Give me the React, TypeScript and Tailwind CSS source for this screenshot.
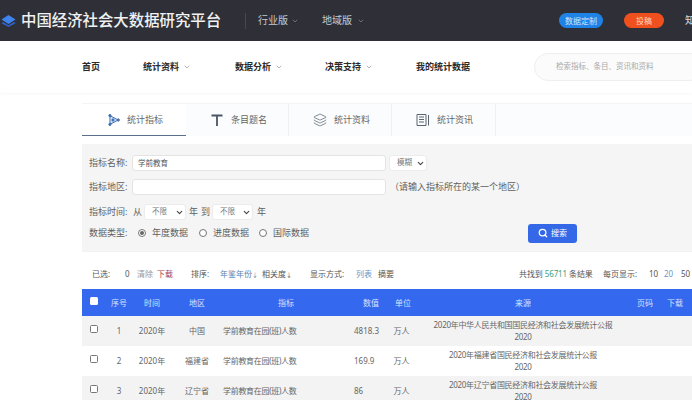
import { ChevronDown, Search, Layers } from "lucide-react";

const FONT = "font-['Noto_Sans','Noto_Sans_CJK_SC',sans-serif]";

const rows = [
  { no: 1, year: "2020年", area: "中国", value: "4818.3", source: "2020年中华人民共和国国民经济和社会发展统计公报", bg: "bg-[#f3f3f3]" },
  { no: 2, year: "2020年", area: "福建省", value: "169.9", source: "2020年福建省国民经济和社会发展统计公报", bg: "bg-white" },
  { no: 3, year: "2020年", area: "辽宁省", value: "86", source: "2020年辽宁省国民经济和社会发展统计公报", bg: "bg-[#f3f3f3]" },
];

const Caret = () => <ChevronDown className="w-[8px] h-[8px] shrink-0 text-[#8b8f98]" strokeWidth={2} />;

const SelectBox = ({ label, w }: { label: string; w: string }) => (
  <div className={`${w} h-[16px] bg-white rounded-[3px] border border-[#ececec] flex items-center justify-between pl-[7px] pr-[1px] text-[7.5px] text-[#777]`}>
    <span>{label}</span>
    <ChevronDown className="w-[9px] h-[9px] text-[#444]" strokeWidth={3} />
  </div>
);

const Radio = ({ on }: { on?: boolean }) => (
  <span className="w-[8px] h-[8px] rounded-full border border-[#777] bg-white flex items-center justify-center">
    {on && <span className="w-[4px] h-[4px] rounded-full bg-[#666]" />}
  </span>
);

const Check = ({ white }: { white?: boolean }) => (
  <span className={`block w-[8px] h-[8px] rounded-[1.5px] ${white ? "bg-white mb-[3px]" : "border border-[#777] bg-white mb-[5px]"}`} />
);

const App = () => {
  return (
    <div className={`${FONT} w-[692px] h-[400px] overflow-hidden bg-white text-[#555]`}>
      {/* 顶部深色条 */}
      <header className="h-[41px] bg-[#2f3037] flex items-center whitespace-nowrap">
        <svg viewBox="0 0 16 16" className="w-[15px] h-[15px] ml-[1px] mr-[5px] shrink-0">
          <path d="M2 9.5 8 13 14 9.5 15.5 10.8 8 15 .5 10.8Z" fill="#2d63c9" />
          <path d="M8 2 15.5 6.8 8 11.6 .5 6.8Z" fill="#3f83ee" />
        </svg>
        <span className="w-[224px] shrink-0 text-[15.4px] font-medium text-[#f1f1f1] tracking-normal">中国经济社会大数据研究平台</span>
        <span className="w-px h-[16px] shrink-0 bg-[#3a4a6b]" />
        <span className="ml-[12px] w-[33px] shrink-0 text-[10px] text-[#c9c9cc]">行业版</span>
        <Caret />
        <span className="ml-[23px] w-[35px] shrink-0 text-[10px] text-[#c9c9cc]">地域版</span>
        <Caret />
        <span className="ml-[194px] w-[44px] h-[15px] shrink-0 rounded-full bg-[#1f82e6] text-[8px] text-[#cfe6fb] flex items-center justify-center">数据定制</span>
        <span className="ml-[21px] w-[40px] h-[15px] shrink-0 rounded-full bg-[#f0501e] text-[8px] text-[#ffd9c8] flex items-center justify-center">投稿</span>
        <span className="ml-[21px] shrink-0 text-[10px] text-[#dddddd]">知</span>
      </header>

      {/* 主导航 */}
      <nav className="h-[52px] bg-white flex items-center pl-[82px] text-[9px] font-bold text-[#2b2b2b] whitespace-nowrap shadow-[0_1px_3px_rgba(0,0,0,0.04)]">
        <span className="w-[61px] shrink-0">首页</span>
        <span className="w-[40px] shrink-0">统计资料</span>
        <Caret />
        <span className="ml-[44px] w-[40px] shrink-0">数据分析</span>
        <Caret />
        <span className="ml-[42px] w-[40px] shrink-0">决策支持</span>
        <Caret />
        <span className="ml-[43px] w-[118px] shrink-0">我的统计数据</span>
        <div className="w-[170px] h-[28px] shrink-0 rounded-full border border-[#efefef] bg-[#fbfbfb] flex items-center pl-[21px] text-[7.5px] font-normal text-[#aaa]">
          检索指标、条目、资讯和资料
        </div>
      </nav>

      <div className="pl-[82px] pt-[10px]">
        {/* 标签页 */}
        <div className="flex h-[33px] w-[610px] bg-[#fbfcfd] text-[9px] text-[#666] border-t border-[#f4f4f4] whitespace-nowrap">
          <div className="w-[104px] bg-white border-b border-[#5a6f8c] flex items-center pl-[24px] gap-[7px]">
            <svg viewBox="0 0 16 16" className="w-[14px] h-[14px]" fill="#cfe0f7" stroke="#3f6fb5" strokeWidth="1.1">
              <path d="M4.5 3 14 8 4.5 13Z" />
              <circle cx="4.5" cy="3" r="1.3" fill="#3f6fb5" />
              <circle cx="14" cy="8" r="1.3" fill="#3f6fb5" />
              <circle cx="4.5" cy="13" r="1.3" fill="#3f6fb5" />
              <circle cx="8" cy="8" r="1.3" fill="#3f6fb5" />
            </svg>
            <span>统计指标</span>
          </div>
          <div className="w-[103px] border-r border-[#f0f0f0] flex items-center pl-[24px] gap-[7px]">
            <svg viewBox="0 0 14 14" className="w-[14px] h-[14px]" fill="none" stroke="#4a5568" strokeWidth="1.8">
              <path d="M1.5 2.5H12.5M7 2.5V13" />
            </svg>
            <span>条目题名</span>
          </div>
          <div className="w-[103px] border-r border-[#f0f0f0] flex items-center pl-[24px] gap-[7px]">
            <Layers className="w-[14px] h-[14px] text-[#5a6472]" strokeWidth={1.3} />
            <span>统计资料</span>
          </div>
          <div className="w-[104px] border-r border-[#f0f0f0] flex items-center pl-[24px] gap-[7px]">
            <svg viewBox="0 0 14 14" className="w-[14px] h-[14px]" fill="none" stroke="#5a6472" strokeWidth="1">
              <path d="M1 1.5H10V12.5H1ZM3 4H8M3 6.5H8M3 9H8M12.5 2V12.5" />
            </svg>
            <span>统计资讯</span>
          </div>
        </div>

        {/* 筛选区 */}
        <div className="mt-[8px] h-[107px] w-[610px] bg-[#f5f5f5] pl-[7px] pt-[11px] text-[9px] text-[#5f5f5f] whitespace-nowrap">
          <div className="flex items-center h-[16px]">
            <span className="w-[43px]">指标名称:</span>
            <div className="w-[254px] h-[16px] bg-white rounded-[3px] border border-[#e4e4e4] pl-[5px] text-[7.5px] leading-[14px] text-[#555]">学前教育</div>
            <div className="ml-[3px]"><SelectBox label="模糊" w="w-[38px]" /></div>
          </div>
          <div className="flex items-center h-[16px] mt-[8px]">
            <span className="w-[43px]">指标地区:</span>
            <div className="w-[254px] h-[16px] bg-white rounded-[3px] border border-[#e4e4e4]" />
            <span className="ml-[4px]">（请输入指标所在的某一个地区）</span>
          </div>
          <div className="flex items-center h-[16px] mt-[9px]">
            <span className="w-[44px]">指标时间:</span>
            <span className="w-[11px]">从</span>
            <SelectBox label="不限" w="w-[42px]" />
            <span className="ml-[3px] w-[12px]">年</span>
            <span className="w-[11px]">到</span>
            <SelectBox label="不限" w="w-[41px]" />
            <span className="ml-[4px]">年</span>
          </div>
          <div className="flex items-center h-[16px] mt-[5px]">
            <span className="w-[49px]">数据类型:</span>
            <Radio on />
            <span className="ml-[6px] w-[47px]">年度数据</span>
            <Radio />
            <span className="ml-[6px] w-[46px]">进度数据</span>
            <Radio />
            <span className="ml-[6px] w-[255px]">国际数据</span>
            <div className="w-[49px] h-[19px] rounded-[3px] bg-[#3468e6] text-white text-[8px] flex items-center justify-center gap-[3px]">
              <Search className="w-[10px] h-[10px]" strokeWidth={3} />
              <span>搜索</span>
            </div>
          </div>
        </div>

        {/* 工具条 */}
        <div className="h-[38px] w-[610px] flex items-center pl-[10px] pt-[6px] text-[8px] text-[#555] whitespace-nowrap border-t border-[#f2f2f2]">
          <span className="w-[33px]">已选:</span>
          <span className="w-[12px]">0</span>
          <span className="w-[20px] text-[#999]">清除</span>
          <span className="w-[34px] text-[#a0404f]">下载</span>
          <span className="w-[29px]">排序:</span>
          <span className="w-[42px] text-[#5e7fae]">年鉴年份<span className="text-[6px]">↓</span></span>
          <span className="w-[48px]">相关度<span className="text-[6px]">↓</span></span>
          <span className="w-[46px]">显示方式:</span>
          <span className="w-[22px] text-[#6d93c4]">列表</span>
          <span className="w-[141px]">摘要</span>
          <span className="w-[84px] tracking-[-0.1px]">
            共找到 <span className="text-[#3f9e78]">56711</span> 条结果
          </span>
          <span className="w-[46px]">每页显示:</span>
          <span className="w-[15px]">10</span>
          <span className="w-[17px] text-[#6d93c4]">20</span>
          <span>50</span>
        </div>

        {/* 结果表格 */}
        <div className="w-[610px] text-[8px] whitespace-nowrap">
          <div className="h-[27px] bg-[#3468ee] text-[#d5e2ff] grid grid-cols-[24px_26px_40px_50px_128px_42px_22px_218px_26px_34px] items-center text-center">
            <span className="flex justify-center"><Check white /></span>
            <span>序号</span>
            <span>时间</span>
            <span>地区</span>
            <span>指标</span>
            <span>数值</span>
            <span>单位</span>
            <span>来源</span>
            <span>页码</span>
            <span>下载</span>
          </div>
          {rows.map((r) => (
            <div key={r.no} className={`${r.bg} h-[30px] text-[#666] grid grid-cols-[24px_26px_40px_50px_128px_42px_22px_218px_26px_34px] items-center text-center`}>
              <span className="flex justify-center"><Check /></span>
              <span>{r.no}</span>
              <span>{r.year}</span>
              <span>{r.area}</span>
              <span className="text-left pl-[1px] tracking-[-0.3px]">学前教育在园(班)人数</span>
              <span className="text-left pl-[4px]">{r.value}</span>
              <span className="pr-[3px]">万人</span>
              <span className="leading-[12.5px] tracking-[-0.3px]">
                {r.source}
                <br />
                2020
              </span>
              <span />
              <span />
            </div>
          ))}
        </div>
      </div>
    </div>
  );
};

export default App;
